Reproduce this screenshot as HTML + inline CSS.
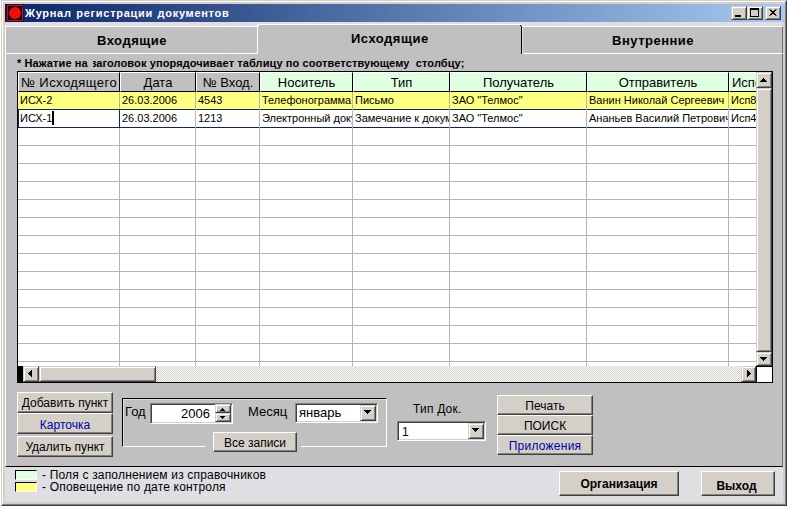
<!DOCTYPE html>
<html><head><meta charset="utf-8"><style>
*{margin:0;padding:0;box-sizing:border-box}
html,body{width:788px;height:506px;overflow:hidden;background:#fff;font-family:"Liberation Sans",sans-serif;position:relative}
.a{position:absolute}
.t{position:absolute;white-space:nowrap;line-height:1;color:#000}
.btn{position:absolute;background:#d4d0c8;border-top:1px solid #fff;border-left:1px solid #fff;border-right:1px solid #404040;border-bottom:1px solid #404040;box-shadow:inset -1px -1px 0 #808080}
.btn span{position:absolute;left:0;right:0;text-align:center;white-space:nowrap;line-height:1;font-size:12px;color:#000}
.sb{position:absolute;background:#d4d0c8;border-top:1px solid #d4d0c8;border-left:1px solid #d4d0c8;border-right:1px solid #404040;border-bottom:1px solid #404040;box-shadow:inset 1px 1px 0 #fff,inset -1px -1px 0 #808080}
.hd{position:absolute;top:72px;height:20px;border-top:1px solid #fff;border-left:1px solid #fff;border-bottom:1px solid #000;border-right:1px solid #000;background:#e0ffe0;overflow:hidden}
.hd span{position:absolute;left:0;right:0;top:3px;text-align:center;white-space:nowrap;line-height:1;font-size:13px;color:#000}
.c{position:absolute;white-space:nowrap;line-height:1;font-size:11px;color:#000;overflow:hidden;height:14px}
.sunk{position:absolute;background:#fff;border-top:1px solid #808080;border-left:1px solid #808080;border-right:1px solid #fff;border-bottom:1px solid #fff;box-shadow:inset 1px 1px 0 #404040,inset -1px -1px 0 #d4d0c8}
</style></head><body>
<div class="a" style="left:1px;top:0px;width:786px;height:506px;background:#d4d0c8;border-top:1px solid #d4d0c8;border-left:1px solid #d4d0c8;border-right:1px solid #404040;border-bottom:1px solid #404040"></div>
<div class="a" style="left:2px;top:1px;width:784px;height:504px;border-top:1px solid #fff;border-left:1px solid #fff;border-right:1px solid #808080;border-bottom:1px solid #808080"></div>
<div class="a" style="left:5px;top:22px;width:778px;height:480px;background:#dfdfe3"></div>
<div class="a" style="left:5px;top:4px;width:780px;height:18px;background:linear-gradient(to right,#0a246a,#a6caf0)"></div>
<div class="a" style="left:5px;top:4px;width:19px;height:18px;background:#3a0828"></div>
<div class="a" style="left:7px;top:5px;width:16px;height:16px;background:#0a0010;border:1px solid #8a2050"></div>
<div class="a" style="left:9px;top:7px;width:12px;height:12px;border-radius:50%;background:#ff0808"></div>
<div class="t" style="left:25px;top:8px;font-size:11px;font-weight:bold;color:#fff;letter-spacing:0.7px;word-spacing:1px">Журнал регистрации документов</div>
<div class="sb" style="left:731px;top:6px;width:16px;height:14px"></div>
<div class="a" style="left:735px;top:15px;width:6px;height:2px;background:#000"></div>
<div class="sb" style="left:747px;top:6px;width:16px;height:14px"></div>
<div class="a" style="left:750px;top:8px;width:9px;height:9px;border:1px solid #000;border-top-width:2px"></div>
<div class="sb" style="left:765px;top:6px;width:16px;height:14px"></div>
<svg class="a" style="left:765px;top:6px" width="16" height="14"><path d="M4.5 3.5 L10.5 9.5 M10.5 3.5 L4.5 9.5 M5.5 3.5 L11.5 9.5 M11.5 3.5 L5.5 9.5" stroke="#000" stroke-width="1" fill="none"/></svg>
<div class="a" style="left:5px;top:26px;width:252px;height:28px;background:#c0c0c0;border-top:1px solid #fff;border-left:1px solid #fff"></div>
<div class="a" style="left:522px;top:26px;width:261px;height:28px;background:#c0c0c0;border-top:1px solid #fff;border-left:1px solid #d8d8d8;border-right:1px solid #707070"></div>
<div class="a" style="left:5px;top:53px;width:778px;height:414px;background:#c0c0c0;border-top:1px solid #fff;border-left:1px solid #fff;border-right:1px solid #707070;border-bottom:1px solid #000"></div>
<div class="a" style="left:257px;top:24px;width:265px;height:30px;background:#c0c0c0;border-top:1px solid #fff;border-left:1px solid #fff;border-right:1px solid #000"></div>
<div class="a" style="left:257px;top:24px;width:1px;height:1px;background:#dfdfe3"></div>
<div class="a" style="left:258px;top:25px;width:1px;height:1px;background:#fff"></div>
<div class="a" style="left:521px;top:24px;width:1px;height:2px;background:#dfdfe3"></div>
<div class="a" style="left:520px;top:25px;width:1px;height:1px;background:#000"></div>
<div class="t" style="left:97px;top:34px;font-size:13px;font-weight:bold;color:#000;letter-spacing:0.5px">Входящие</div>
<div class="t" style="left:351px;top:32px;font-size:13px;font-weight:bold;color:#000;letter-spacing:0.5px">Исходящие</div>
<div class="t" style="left:612px;top:34px;font-size:13px;font-weight:bold;color:#000;letter-spacing:0.5px">Внутренние</div>
<div class="t" style="left:17px;top:58px;font-size:11px;font-weight:bold;color:#000;letter-spacing:0.1px">* Нажатие на заголовок упорядочивает таблицу по соответствующему&nbsp; столбцу;</div>
<div class="a" style="left:91px;top:59px;width:2px;height:9px;background:#c0c0c0"></div>
<div class="a" style="left:17px;top:71px;width:756px;height:312px;background:#fff;border:1px solid #000"></div>
<div class="a" style="left:18px;top:92px;width:738px;height:17px;background:#ffff80"></div>
<div class="a" style="left:18px;top:109px;width:738px;height:1px;background:#0a246a"></div>
<div class="a" style="left:18px;top:127px;width:738px;height:1px;background:#0a246a"></div>
<div class="a" style="left:18px;top:145px;width:738px;height:1px;background:#b4b4b4"></div>
<div class="a" style="left:18px;top:163px;width:738px;height:1px;background:#b4b4b4"></div>
<div class="a" style="left:18px;top:181px;width:738px;height:1px;background:#b4b4b4"></div>
<div class="a" style="left:18px;top:199px;width:738px;height:1px;background:#b4b4b4"></div>
<div class="a" style="left:18px;top:217px;width:738px;height:1px;background:#b4b4b4"></div>
<div class="a" style="left:18px;top:235px;width:738px;height:1px;background:#b4b4b4"></div>
<div class="a" style="left:18px;top:253px;width:738px;height:1px;background:#b4b4b4"></div>
<div class="a" style="left:18px;top:271px;width:738px;height:1px;background:#b4b4b4"></div>
<div class="a" style="left:18px;top:289px;width:738px;height:1px;background:#b4b4b4"></div>
<div class="a" style="left:18px;top:307px;width:738px;height:1px;background:#b4b4b4"></div>
<div class="a" style="left:18px;top:325px;width:738px;height:1px;background:#b4b4b4"></div>
<div class="a" style="left:18px;top:343px;width:738px;height:1px;background:#b4b4b4"></div>
<div class="a" style="left:18px;top:361px;width:738px;height:1px;background:#b4b4b4"></div>
<div class="a" style="left:18px;top:379px;width:738px;height:1px;background:#b4b4b4"></div>
<div class="a" style="left:119px;top:92px;width:1px;height:274px;background:#b4b4b4"></div>
<div class="a" style="left:195px;top:92px;width:1px;height:274px;background:#b4b4b4"></div>
<div class="a" style="left:259px;top:92px;width:1px;height:274px;background:#b4b4b4"></div>
<div class="a" style="left:352px;top:92px;width:1px;height:274px;background:#b4b4b4"></div>
<div class="a" style="left:449px;top:92px;width:1px;height:274px;background:#b4b4b4"></div>
<div class="a" style="left:586px;top:92px;width:1px;height:274px;background:#b4b4b4"></div>
<div class="a" style="left:728px;top:92px;width:1px;height:274px;background:#b4b4b4"></div>
<div class="hd" style="left:18px;width:102px;background:#c0c0c0"><span style='letter-spacing:0.45px'>№ Исходящего</span></div>
<div class="hd" style="left:120px;width:76px;background:#c0c0c0"><span>Дата</span></div>
<div class="hd" style="left:196px;width:64px;background:#c0c0c0"><span>№ Вход.</span></div>
<div class="hd" style="left:260px;width:93px;background:#e0ffe0"><span>Носитель</span></div>
<div class="hd" style="left:353px;width:97px;background:#e0ffe0"><span>Тип</span></div>
<div class="hd" style="left:450px;width:137px;background:#e0ffe0"><span>Получатель</span></div>
<div class="hd" style="left:587px;width:142px;background:#e0ffe0"><span>Отправитель</span></div>
<div class="hd" style="left:729px;width:28px;background:#e0ffe0"><span style="text-align:left;left:2px">Испо</span></div>
<div class="c" style="left:20px;top:95px;width:99px">ИСХ-2</div>
<div class="c" style="left:122px;top:95px;width:73px">26.03.2006</div>
<div class="c" style="left:198px;top:95px;width:61px">4543</div>
<div class="c" style="left:262px;top:95px;width:90px">Телефонограмма</div>
<div class="c" style="left:355px;top:95px;width:94px">Письмо</div>
<div class="c" style="left:452px;top:95px;width:134px">ЗАО "Телмос"</div>
<div class="c" style="left:589px;top:95px;width:139px">Ванин Николай Сергеевич</div>
<div class="c" style="left:731px;top:95px;width:25px">Исп8</div>
<div class="c" style="left:20px;top:113px;width:99px">ИСХ-1</div>
<div class="c" style="left:122px;top:113px;width:73px">26.03.2006</div>
<div class="c" style="left:198px;top:113px;width:61px">1213</div>
<div class="c" style="left:262px;top:113px;width:90px">Электронный документ</div>
<div class="c" style="left:355px;top:113px;width:94px">Замечание к документу</div>
<div class="c" style="left:452px;top:113px;width:134px">ЗАО "Телмос"</div>
<div class="c" style="left:589px;top:113px;width:139px">Ананьев Василий Петрович</div>
<div class="c" style="left:731px;top:113px;width:25px">Исп4</div>
<div class="a" style="left:18px;top:109px;width:102px;height:19px;border:1px solid #0a246a"></div>
<div class="a" style="left:52px;top:111px;width:2px;height:14px;background:#000"></div>
<div class="sb" style="left:756px;top:72px;width:16px;height:16px"></div>
<svg class="a" style="left:756px;top:72px" width="16" height="16" shape-rendering="crispEdges"><path d="M7 6h1v1h-1zM6 7h3v1h-3zM5 8h5v1h-5zM4 9h7v1h-7z" fill="#000"/></svg>
<div class="sb" style="left:756px;top:88px;width:16px;height:264px"></div>
<div class="sb" style="left:756px;top:352px;width:16px;height:14px"></div>
<svg class="a" style="left:756px;top:352px" width="16" height="14" shape-rendering="crispEdges"><path d="M4 5h7v1h-7zM5 6h5v1h-5zM6 7h3v1h-3zM7 8h1v1h-1z" fill="#000"/></svg>
<div class="a" style="left:18px;top:366px;width:5px;height:16px;background:#000"></div>
<div class="a" style="left:23px;top:366px;width:733px;height:16px;background-color:#fff;background-image:linear-gradient(45deg,#d4d0c8 25%,transparent 25%,transparent 75%,#d4d0c8 75%),linear-gradient(45deg,#d4d0c8 25%,transparent 25%,transparent 75%,#d4d0c8 75%);background-size:2px 2px;background-position:0 0,1px 1px"></div>
<div class="sb" style="left:23px;top:366px;width:16px;height:16px"></div>
<svg class="a" style="left:23px;top:366px" width="16" height="16" shape-rendering="crispEdges"><path d="M8 4h1v7h-1zM7 5h1v5h-1zM6 6h1v3h-1zM5 7h1v1h-1z" fill="#000"/></svg>
<div class="sb" style="left:39px;top:366px;width:117px;height:16px"></div>
<div class="sb" style="left:741px;top:366px;width:15px;height:16px"></div>
<svg class="a" style="left:741px;top:366px" width="15" height="16" shape-rendering="crispEdges"><path d="M6 4h1v7h-1zM7 5h1v5h-1zM8 6h1v3h-1zM9 7h1v1h-1z" fill="#000"/></svg>
<div class="a" style="left:756px;top:366px;width:16px;height:16px;background:#fff;border-top:1px solid #000;border-left:1px solid #000"></div>
<div class="btn" style="left:17px;top:392px;width:96px;height:21px"><span style="top:4px;color:#000;font-size:12px;font-weight:normal;">Добавить пункт</span></div>
<div class="btn" style="left:17px;top:413px;width:96px;height:21px"><span style="top:5px;color:#0000a8;font-size:12px;font-weight:normal;">Карточка</span></div>
<div class="btn" style="left:17px;top:436px;width:96px;height:21px"><span style="top:4px;color:#000;font-size:12px;font-weight:normal;">Удалить пункт</span></div>
<div class="a" style="left:122px;top:398px;width:265px;height:49px;border-top:1px solid #000;border-left:1px solid #000;border-right:1px solid #fff;border-bottom:1px solid #fff;box-shadow:inset 1px 1px 0 #dcdcdc"></div>
<div class="t" style="left:125px;top:405px;font-size:13px;font-weight:normal;color:#000;">Год</div>
<div class="sunk" style="left:150px;top:403px;width:83px;height:21px"></div>
<div class="t" style="left:181px;top:407px;font-size:13px;font-weight:normal;color:#000;">2006</div>
<div class="sb" style="left:215px;top:404px;width:16px;height:9px"></div>
<svg class="a" style="left:215px;top:404px" width="16" height="9" shape-rendering="crispEdges"><path d="M7 4h1v1h-1zM6 5h3v1h-3zM5 6h5v1h-5z" fill="#000"/></svg>
<div class="sb" style="left:215px;top:413px;width:16px;height:9px"></div>
<svg class="a" style="left:215px;top:413px" width="16" height="9" shape-rendering="crispEdges"><path d="M5 3h5v1h-5zM6 4h3v1h-3zM7 5h1v1h-1z" fill="#000"/></svg>
<div class="t" style="left:248px;top:405px;font-size:13px;font-weight:normal;color:#000;">Месяц</div>
<div class="sunk" style="left:295px;top:403px;width:83px;height:20px"></div>
<div class="t" style="left:299px;top:406px;font-size:13px;font-weight:normal;color:#000;">январь</div>
<div class="sb" style="left:360px;top:405px;width:16px;height:16px"></div>
<svg class="a" style="left:360px;top:405px" width="16" height="16" shape-rendering="crispEdges"><path d="M4 5h7v1h-7zM5 6h5v1h-5zM6 7h3v1h-3zM7 8h1v1h-1z" fill="#000"/></svg>
<div class="a" style="left:206px;top:446px;width:95px;height:1px;background:#c0c0c0"></div>
<div class="btn" style="left:213px;top:432px;width:84px;height:20px"><span style="top:4px;color:#000;font-size:12px;font-weight:normal;">Все записи</span></div>
<div class="t" style="left:413px;top:403px;font-size:12px;font-weight:normal;color:#000;letter-spacing:0.2px">Тип Док.</div>
<div class="sunk" style="left:397px;top:421px;width:89px;height:20px"></div>
<div class="t" style="left:402px;top:426px;font-size:12px;font-weight:normal;color:#000;">1</div>
<div class="sb" style="left:468px;top:423px;width:16px;height:16px"></div>
<svg class="a" style="left:468px;top:423px" width="16" height="16" shape-rendering="crispEdges"><path d="M4 5h7v1h-7zM5 6h5v1h-5zM6 7h3v1h-3zM7 8h1v1h-1z" fill="#000"/></svg>
<div class="btn" style="left:497px;top:395px;width:96px;height:20px"><span style="top:4px;color:#000;font-size:12px;font-weight:normal;">Печать</span></div>
<div class="btn" style="left:497px;top:415px;width:96px;height:20px"><span style="top:4px;color:#000;font-size:12px;font-weight:normal;">ПОИСК</span></div>
<div class="btn" style="left:497px;top:435px;width:96px;height:20px"><span style="top:4px;color:#0000a8;font-size:12px;font-weight:normal;letter-spacing:0.25px">Приложения</span></div>
<div class="a" style="left:15px;top:470px;width:22px;height:10px;background:#e0ffe0;border-top:1px solid #000;border-left:1px solid #000;border-right:1px solid #fff;border-bottom:1px solid #fff"></div>
<div class="a" style="left:15px;top:482px;width:22px;height:10px;background:#ffff80;border-top:1px solid #000;border-left:1px solid #000;border-right:1px solid #fff;border-bottom:1px solid #fff"></div>
<div class="t" style="left:42px;top:469px;font-size:12px;font-weight:normal;color:#000;letter-spacing:0.18px">- Поля с заполнением из справочников</div>
<div class="t" style="left:42px;top:481px;font-size:12px;font-weight:normal;color:#000;letter-spacing:0.18px">- Оповещение по дате контроля</div>
<div class="btn" style="left:559px;top:471px;width:120px;height:25px"><span style="top:6px;color:#000;font-size:12px;font-weight:bold;">Организация</span></div>
<div class="btn" style="left:701px;top:471px;width:74px;height:25px"><span style="top:8px;color:#000;font-size:12px;font-weight:bold;left:-3px">Выход</span></div>
</body></html>
